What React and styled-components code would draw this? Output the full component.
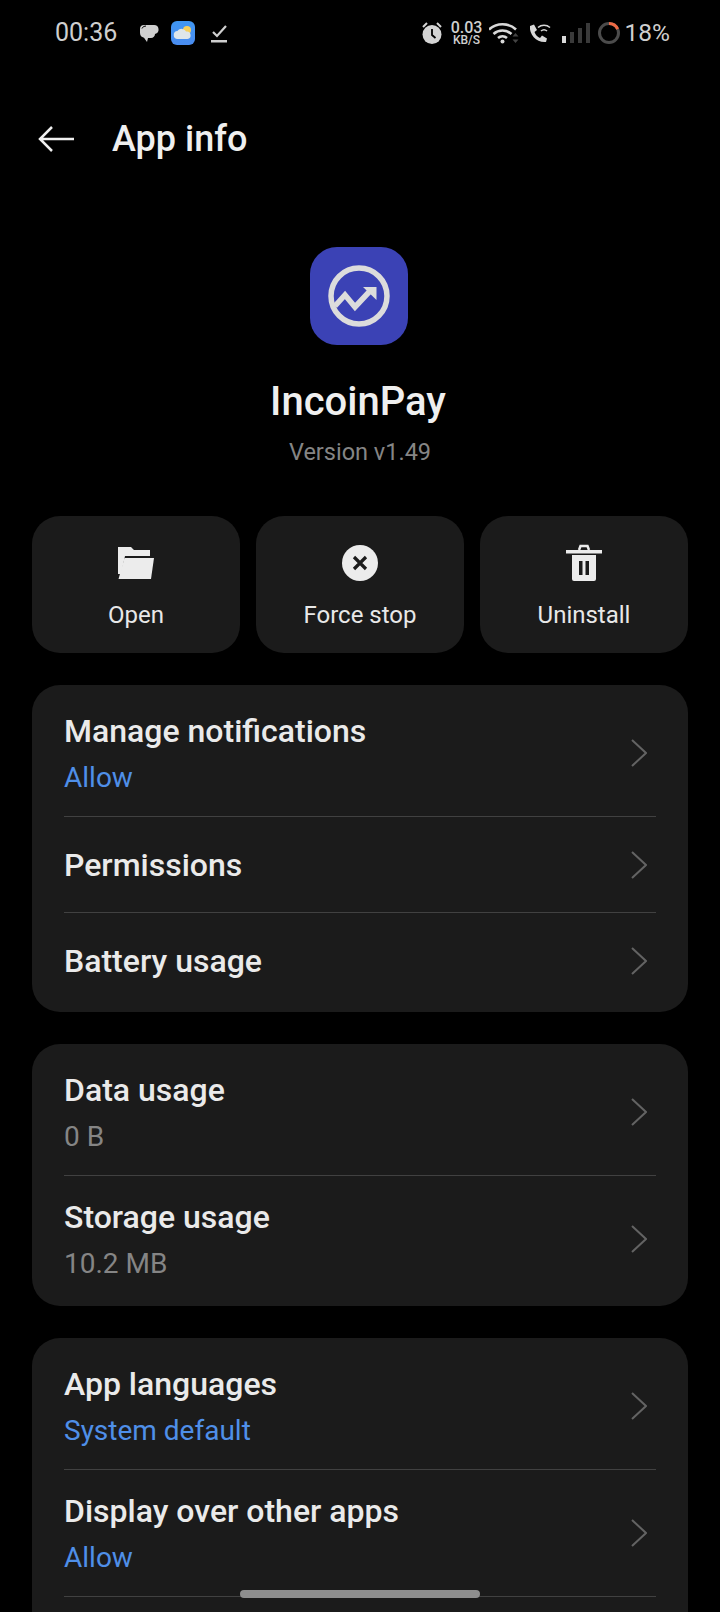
import React from "react";
import styled, { createGlobalStyle } from "styled-components";

const GlobalStyle = createGlobalStyle`
  html, body {
    margin: 0;
    padding: 0;
    background: #000;
    font-family: Roboto, "Noto Sans", sans-serif;
  }
`;

const Page = styled.div`
  position: relative;
  width: 720px;
  height: 1612px;
  overflow: hidden;
  background: #000;
`;

const StatusBar = styled.div`
  display: flex;
  align-items: center;
  justify-content: space-between;
  height: 26px;
  padding: 20px 50px 0 55px;
  color: #cfcfcf;
`;

const StatusGroup = styled.div`
  display: flex;
  align-items: center;
`;

const Time = styled.span`
  font-size: 25px;
  line-height: 26px;
  margin-right: 22px;
`;

const NetSpeed = styled.div`
  display: flex;
  flex-direction: column;
  align-items: center;
  width: 34px;
  margin: 0 5px 0 8px;
  font-weight: 500;
`;

const NetValue = styled.span`
  font-size: 16px;
  line-height: 14px;
`;

const NetUnit = styled.span`
  font-size: 12px;
  line-height: 10px;
`;

const BatteryText = styled.span`
  font-size: 24.5px;
  line-height: 26px;
  margin-left: 4px;
`;

const Header = styled.header`
  display: flex;
  align-items: center;
  height: 46px;
  padding: 70px 0 0 38px;
`;

const Title = styled.h1`
  margin: 0 0 0 38px;
  font-size: 36px;
  line-height: 46px;
  font-weight: 500;
  color: #efefef;
`;

const Hero = styled.section`
  display: flex;
  flex-direction: column;
  align-items: center;
  padding-top: 85px;
`;

const LogoFrame = styled.div`
  display: flex;
  margin-right: 2px;
`;

const AppName = styled.div`
  margin: 33px 4px 0 0;
  font-size: 40px;
  line-height: 48px;
  font-weight: 500;
  color: #efefef;
`;

const Version = styled.div`
  margin-top: 11px;
  font-size: 23.5px;
  line-height: 30px;
  color: #858585;
`;

const Actions = styled.div`
  display: grid;
  grid-template-columns: repeat(3, 208px);
  gap: 16px;
  padding: 49px 32px 0;
`;

const ActionButton = styled.div`
  display: flex;
  flex-direction: column;
  align-items: center;
  height: 137px;
  padding-top: 28px;
  box-sizing: border-box;
  gap: 17px;
  border-radius: 28px;
  background: #1b1b1b;
`;

const ActionLabel = styled.span`
  font-size: 24px;
  line-height: 32px;
  color: #e8e8e8;
`;

const Cards = styled.div`
  display: flex;
  flex-direction: column;
  gap: 32px;
  padding: 32px 32px 0;
`;

const Card = styled.section`
  padding: 5px 32px 4px;
  border-radius: 28px;
  background: #1b1b1b;
`;

const Row = styled.div`
  display: flex;
  align-items: center;
  justify-content: space-between;
  height: ${(p) => (p.$tall ? "126px" : "95px")};
  padding-right: 8px;
  & + & {
    border-top: 1px solid #414141;
  }
`;

const RowText = styled.div`
  display: flex;
  flex-direction: column;
  gap: 10px;
  padding-top: ${(p) => (p.$tall ? "2px" : "0")};
`;

const RowTitle = styled.span`
  font-size: 32px;
  line-height: 38px;
  font-weight: 500;
  color: #eaeaea;
`;

const RowValue = styled.span`
  font-size: 28px;
  line-height: 36px;
  color: ${(p) => (p.$accent ? "#4f8fe8" : "#858585")};
`;

const HomeHandle = styled.div`
  position: absolute;
  left: 240px;
  bottom: 14px;
  width: 240px;
  height: 8px;
  border-radius: 4px;
  background: #8e8e8e;
`;

const Chevron = () => (
  <svg width="16" height="28" viewBox="0 0 16 28" fill="none" style={{ marginRight: 1 }}>
    <path d="M1 1l14 13L1 27" stroke="#636363" strokeWidth="2" />
  </svg>
);

const BubbleIcon = () => (
  <svg width="20" height="20" viewBox="0 0 20 20" style={{ marginRight: 12 }}>
    <path d="M5 2h10a4.500 4.500 0 0 1 1 8.900A4 4 0 0 1 12 15H9l-1 4-3-4.300A5 5 0 0 1 1 10V6a4 4 0 0 1 4-4z" fill="#cfcfcf" />
    <path d="M3 5.500A4 4 0 0 1 7 3" stroke="#000" strokeWidth="1" fill="none" />
  </svg>
);

const WeatherIcon = () => (
  <svg width="24" height="24" viewBox="0 0 24 24" style={{ marginRight: 15 }}>
    <defs>
      <linearGradient id="sky" x1="0" y1="0" x2="0" y2="1">
        <stop offset="0" stopColor="#3f96f2" />
        <stop offset="1" stopColor="#4a8cf0" />
      </linearGradient>
    </defs>
    <rect width="24" height="24" rx="6" fill="url(#sky)" />
    <circle cx="16" cy="9" r="4" fill="#f6cf5a" />
    <path d="M7 18a4 4 0 0 1-.500-8A5 5 0 0 1 15 10.500 3.800 3.800 0 0 1 16.500 18z" fill="#dfe6ea" />
  </svg>
);

const TaskIcon = () => (
  <svg width="18" height="20" viewBox="0 0 18 20" fill="none">
    <path d="M3 9l4 4 9-10" stroke="#cfcfcf" strokeWidth="2.200" />
    <rect x="1" y="17" width="16" height="2.500" fill="#cfcfcf" />
  </svg>
);

const AlarmIcon = () => (
  <svg width="20" height="22" viewBox="0 0 20 22">
    <circle cx="10" cy="12.500" r="9.500" fill="#d4d4d4" />
    <path d="M10 7v6l3.500 3" stroke="#000" strokeWidth="1.800" fill="none" />
    <path d="M1 5l4-4M19 5l-4-4" stroke="#d4d4d4" strokeWidth="2" />
  </svg>
);

const WifiIcon = () => (
  <svg width="30" height="22" viewBox="0 0 30 22" fill="none">
    <path d="M0 7.500a20 20 0 0 1 27 0" stroke="#d8d8d8" strokeWidth="2.600" />
    <path d="M4.500 12a13.500 13.500 0 0 1 18 0" stroke="#d8d8d8" strokeWidth="2.600" />
    <path d="M9 16a7 7 0 0 1 9 0" stroke="#d8d8d8" strokeWidth="2.600" />
    <circle cx="13.500" cy="19.500" r="2" fill="#d8d8d8" />
    <path d="M26.500 11l3 3.500h-6zM26.500 21l3-3.500h-6z" fill="#444" />
  </svg>
);

const CallIcon = () => (
  <svg width="22" height="20" viewBox="0 0 22 20" fill="none" style={{ margin: "0 11px 0 10px" }}>
    <path d="M1 3l4-1.500 3 5.500-2.500 2c1 3 3 5 5.500 6l2-2.500 5 3-1 3.500C8 20 0 12 1 3z" fill="#d8d8d8" />
    <path d="M9 4.500a9 9 0 0 1 12 0M12 8a4.500 4.500 0 0 1 6 0" stroke="#d8d8d8" strokeWidth="1.500" />
  </svg>
);

const SignalIcon = () => (
  <svg width="29" height="20" viewBox="0 0 29 20">
    <rect x="0" y="13" width="4" height="7" fill="#d8d8d8" />
    <rect x="8" y="9" width="4" height="11" fill="#3a3a3a" />
    <rect x="16" y="5" width="4" height="15" fill="#3a3a3a" />
    <rect x="24" y="0" width="4" height="20" fill="#3a3a3a" />
  </svg>
);

// 18% battery drawn as a ring, the arc length comes from the level
const BatteryRing = ({ level }) => {
  const r = 9.5;
  const len = 2 * Math.PI * r;
  return (
    <svg width="24" height="24" viewBox="0 0 24 24" fill="none" style={{ marginLeft: 6 }}>
      <circle cx="12" cy="12" r={r} stroke="#4b4b4b" strokeWidth="3" />
      <circle
        cx="12"
        cy="12"
        r={r}
        stroke="#ee6a45"
        strokeWidth="3"
        strokeDasharray={`${len * level} ${len}`}
        transform="rotate(-90 12 12)"
      />
    </svg>
  );
};

const BackArrow = () => (
  <svg width="36" height="28" viewBox="0 0 36 28" fill="none">
    <path d="M14 2L2 14l12 12M2 14h34" stroke="#efefef" strokeWidth="2.500" />
  </svg>
);

const AppLogo = () => (
  <svg width="98" height="98" viewBox="0 0 98 98" fill="none">
    <rect width="98" height="98" rx="27" fill="#3b42b5" />
    <circle cx="49" cy="49" r="28" stroke="#dcdcdc" strokeWidth="5.500" />
    <path d="M25 59l10-11 10 12 15-16" stroke="#dcdcdc" strokeWidth="5.500" />
    <path d="M53 40h13.500v13z" fill="#dcdcdc" />
  </svg>
);

const FolderIcon = () => (
  <svg width="38" height="38" viewBox="0 0 38 38">
    <path d="M1 3h13l3 3h16v6H8L4 30H1z" fill="#ececec" />
    <path d="M7.500 14H37l-3 21H1.500z" fill="#ececec" />
  </svg>
);

const StopIcon = () => (
  <svg width="38" height="38" viewBox="0 0 38 38">
    <circle cx="19" cy="19" r="18" fill="#ececec" />
    <path d="M13 13l12 12M25 13L13 25" stroke="#1b1b1b" strokeWidth="3.200" />
  </svg>
);

const TrashIcon = () => (
  <svg width="38" height="38" viewBox="0 0 38 38">
    <path d="M14 6l1.500-4h7L24 6" fill="none" stroke="#ececec" strokeWidth="2.500" />
    <rect x="1" y="6" width="36" height="3.500" fill="#ececec" />
    <path d="M7 11h24v24a2 2 0 0 1-2 2H9a2 2 0 0 1-2-2z" fill="#ececec" />
    <rect x="14" y="17" width="3.500" height="14" fill="#1b1b1b" />
    <rect x="20.500" y="17" width="3.500" height="14" fill="#1b1b1b" />
  </svg>
);

const actions = [
  { label: "Open", Icon: FolderIcon },
  { label: "Force stop", Icon: StopIcon },
  { label: "Uninstall", Icon: TrashIcon },
];

const groups = [
  [
    { title: "Manage notifications", value: "Allow", accent: true },
    { title: "Permissions" },
    { title: "Battery usage" },
  ],
  [
    { title: "Data usage", value: "0 B" },
    { title: "Storage usage", value: "10.2 MB" },
  ],
  [
    { title: "App languages", value: "System default", accent: true },
    { title: "Display over other apps", value: "Allow", accent: true },
    { title: "" },
  ],
];

export default function App() {
  return (
    <Page>
      <GlobalStyle />
      <StatusBar>
        <StatusGroup>
          <Time>00:36</Time>
          <BubbleIcon />
          <WeatherIcon />
          <TaskIcon />
        </StatusGroup>
        <StatusGroup>
          <AlarmIcon />
          <NetSpeed>
            <NetValue>0.03</NetValue>
            <NetUnit>KB/S</NetUnit>
          </NetSpeed>
          <WifiIcon />
          <CallIcon />
          <SignalIcon />
          <BatteryRing level={0.18} />
          <BatteryText>18%</BatteryText>
        </StatusGroup>
      </StatusBar>

      <Header>
        <BackArrow />
        <Title>App info</Title>
      </Header>

      <Hero>
        <LogoFrame>
          <AppLogo />
        </LogoFrame>
        <AppName>IncoinPay</AppName>
        <Version>Version v1.49</Version>
      </Hero>

      <Actions>
        {actions.map(({ label, Icon }) => (
          <ActionButton key={label}>
            <Icon />
            <ActionLabel>{label}</ActionLabel>
          </ActionButton>
        ))}
      </Actions>

      <Cards>
        {groups.map((rows, i) => (
          <Card key={i}>
            {rows.map((row, j) => (
              <Row key={j} $tall={!!row.value}>
                <RowText $tall={!!row.value}>
                  <RowTitle>{row.title}</RowTitle>
                  {row.value && <RowValue $accent={row.accent}>{row.value}</RowValue>}
                </RowText>
                {row.title && <Chevron />}
              </Row>
            ))}
          </Card>
        ))}
      </Cards>

      <HomeHandle />
    </Page>
  );
}
